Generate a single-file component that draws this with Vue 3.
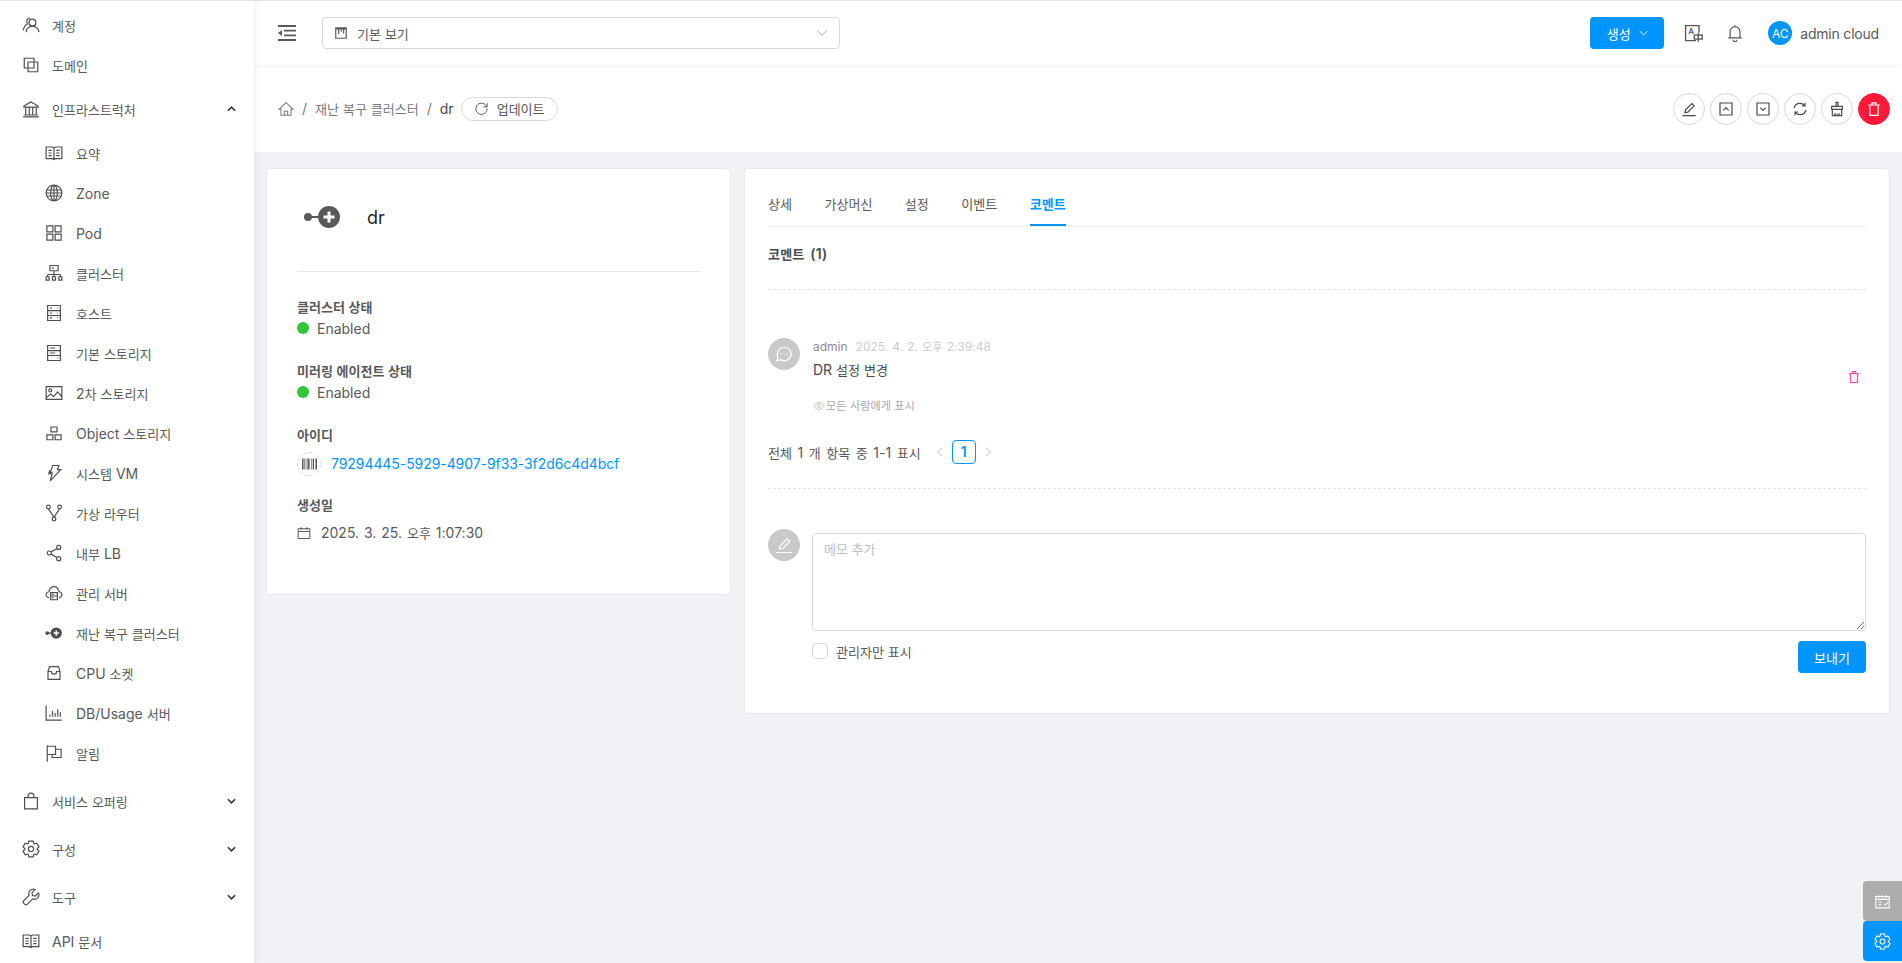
<script setup>
import { h } from 'vue';

const K = (p) =>
  p.t.split(/([\uAC00-\uD7A3]+)/).filter(Boolean).map((s) =>
    /[\uAC00-\uD7A3]/.test(s) ? h('span', { class: 'ko' }, s) : s
  );
K.props = ['t'];

function gearPath() {
  const pts = [];
  const c = 12;
  for (let i = 0; i < 6; i++) {
    const a = (Math.PI / 3) * i - Math.PI / 2;
    const w = 0.27;
    const p = (r, t) => `${(c + r * Math.cos(t)).toFixed(2)} ${(c + r * Math.sin(t)).toFixed(2)}`;
    pts.push(`${i === 0 ? 'M' : 'L'}${p(8.2, a - w * 1.7)}`, `L${p(11, a - w)}`, `L${p(11, a + w)}`, `L${p(8.2, a + w * 1.7)}`);
  }
  return pts.join(' ') + ' Z';
}
const gear = gearPath() + ' M15.5 12a3.5 3.5 0 1 1-7 0 3.5 3.5 0 0 1 7 0z';

const I = {
  team: 'M18.5 8.7a4.5 4.5 0 1 1-9 0 4.5 4.5 0 0 1 9 0z M5.5 21.5c.3-4.5 3.9-8 8.5-8s8.2 3.5 8.5 8 M10.5 2.8a4.5 4.5 0 0 0-3 7.6C4.5 12 2.5 15.5 1.5 19',
  domain: 'M3 3h13v5h5v13H8v-5H3z M8 8h8v8H8z',
  bank: 'M12 2.5 2.5 8v1.5h19V8z M5 9.5V20 M9.7 9.5V20 M14.3 9.5V20 M19 9.5V20 M3 20h18 M1.5 22.5h21',
  read: 'M1.5 4h8.5l2 1.2L14 4h8.5v15.5H14l-2 1.2-2-1.2H1.5z M12 5.2v15.5 M4.5 8.5h4.5 M4.5 12h4.5 M4.5 15.5h4.5 M15 8.5h4.5 M15 12h4.5 M15 15.5h4.5',
  globe: 'M22.5 12a10.5 10.5 0 1 1-21 0 10.5 10.5 0 0 1 21 0z M16.5 12a4.5 10.5 0 1 1-9 0 4.5 10.5 0 0 1 9 0z M12 1.5v21 M2.5 8h19 M2.5 16h19 M1.5 12h21',
  pod: 'M2.5 2.5h8v8h-8z M13.5 2.5h8v8h-8z M2.5 13.5h8v8h-8z M13.5 13.5h8v8h-8z',
  cluster: 'M6.5 2h11v7h-11z M12 9v5 M3.5 14h17 M3.5 14v3 M12 14v3 M20.5 14v3 M1.5 17h4v4.5h-4z M10 17h4v4.5h-4z M18.5 17h4v4.5h-4z M9 5.5h3',
  host: 'M3.5 2h17v20h-17z M3.5 8.7h17 M3.5 15.3h17 M6.5 5.3h3 M6.5 12h3 M6.5 18.6h3 M16.5 5.3h1 M16.5 12h1 M16.5 18.6h1',
  hdd: 'M3.5 2h17v20h-17z M3.5 8.7h17 M3.5 15.3h17 M6.5 5.3h7 M6.5 12h7 M16.5 18.6h1',
  picture: 'M1.5 3.5h21v17h-21z M5 8.5a2 2 0 1 0 4 0 2 2 0 0 0-4 0z M1.5 18.5l6-5 4 3.5 5.5-6.5 5.5 6.5',
  gold: 'M8 4h8v6.5H8z M2.5 14.5h8V21h-8z M13.5 14.5h8V21h-8z',
  bolt: 'M10.5 2h8l-2 5.5H21L7 22.5l2.5-9.5H5l1-3.5 3 1.5L6.5 12z',
  fork: 'M7 4a2.5 2.5 0 1 1-5 0 2.5 2.5 0 0 1 5 0z M22 4a2.5 2.5 0 1 1-5 0 2.5 2.5 0 0 1 5 0z M14.5 20a2.5 2.5 0 1 1-5 0 2.5 2.5 0 0 1 5 0z M4.5 6.5 12 17.5 M19.5 6.5 12 17.5',
  share: 'M21 4.5a2.7 2.7 0 1 1-5.4 0 2.7 2.7 0 0 1 5.4 0z M21 19.5a2.7 2.7 0 1 1-5.4 0 2.7 2.7 0 0 1 5.4 0z M8.4 12A2.7 2.7 0 1 1 3 12a2.7 2.7 0 0 1 5.4 0z M8 10.5 16 6 M8 13.5 16 18',
  cloud: 'M5.5 18.5C2.8 17.8 1 15.5 1.5 13.5c.5-2 2-3 3.8-3.2C6 6.5 8.7 3.5 12 3.5s6 3 6.7 6.8c1.8.2 3.3 1.2 3.8 3.2s-1.3 4.3-4 5 M7.5 11.5h9V21h-9z M7.5 16h9 M9.5 13.8h2 M9.5 18.5h2',
  inbox: 'M4 10 6 3.5h12l2 6.5v10.5H4z M4 10h4.5a3.5 3.5 0 0 0 7 0H20',
  chart: 'M1.5 2v19.5h21 M6.5 17v-3 M10 17V9 M13.5 17v-5 M17 17V7 M20.5 17v-6',
  flag: 'M3 1.5v22 M3 3h11v11H3 M14 7h7.5v11H9.5v-4',
  bag: 'M3.5 7.5h17v15h-17z M8 7.5v-2a4 4 0 0 1 8 0v2',
  gear,
  tool: 'M22 6.5l-4.2 4.200-3.800-.7-.7-3.800L17.500 2a6 6 0 0 0-8 7.800L2.200 17a2.200 2.200 0 0 0 0 3.100l1.700 1.700a2.200 2.200 0 0 0 3.100 0l7.200-7.300A6 6 0 0 0 22 6.500z',
  project: 'M3 3h18v18H3z M3 5h18 M8 5v9 M12.500 5v5 M16.500 5v8',
  home: 'M12 2.500 1.500 12.500h3v9h15v-9h3z M9.500 21.500v-6h5v6',
  reload: 'M20.500 9.500A9 9 0 1 0 21 12 M21 3.500v6h-6',
  bell: 'M12 1.500v2 M5.500 18.500V10a6.500 6.500 0 0 1 13 0v8.500 M3 18.500h18 M9.500 21a2.500 2.500 0 0 0 5 0',
  edit: 'M2 22h20 M6 17.500l.8-4.300L16.200 3.800l3.500 3.500-9.400 9.400z',
  up: 'M3 3h18v18H3z M8 14l4-4 4 4',
  down: 'M3 3h18v18H3z M8 10l4 4 4-4',
  sync: 'M3 10.500C4 6.500 7.500 3.500 12 3.500c2.600 0 5 1.200 6.500 3 M21 13.500c-1 4-4.500 7-9 7-2.600 0-5-1.200-6.500-3 M19.500 2.500v5h-5 M4.500 21.500v-5h5',
  broom: 'M10.500 2h3v6h-3z M4 8h16v4.500H4z M5 12.500V22h14v-9.500 M9 22v-4 M12 22v-3 M15 22v-4',
  trash: 'M3.500 6h17 M9 6V2.800h6V6 M5.800 6v15.500h12.400V6z',
  calendar: 'M2 4.500h20v17H2z M2 9.500h20 M7 2v5 M17 2v5',
  eye: 'M1.500 12C4 7.500 7.500 5 12 5s8 2.500 10.500 7C20 16.500 16.500 19 12 19S4 16.500 1.500 12z M15.500 12a3.500 3.500 0 1 1-7 0 3.500 3.500 0 0 1 7 0z',
  msg: 'M12 3a9 9 0 0 0-8 13l-1.500 5 5-1.500A9 9 0 1 0 12 3z M7.500 12h.5 M11.800 12h.5 M16 12h.5',
  review: 'M2.500 5h19v16h-19z M2.500 9h19 M7 3v4 M12 3v4 M17 3v4 M6 13h5 M6 17h5 M14 15l2 2 4-4'
};

const topA = [{ icon: 'team', label: '계정' }, { icon: 'domain', label: '도메인' }];
const subs = [
  { icon: 'read', label: '요약' }, { icon: 'globe', label: 'Zone' }, { icon: 'pod', label: 'Pod' },
  { icon: 'cluster', label: '클러스터' }, { icon: 'host', label: '호스트' }, { icon: 'hdd', label: '기본 스토리지' },
  { icon: 'picture', label: '2차 스토리지' }, { icon: 'gold', label: 'Object 스토리지' }, { icon: 'bolt', label: '시스템 VM' },
  { icon: 'fork', label: '가상 라우터' }, { icon: 'share', label: '내부 LB' }, { icon: 'cloud', label: '관리 서버' },
  { icon: 'dr', label: '재난 복구 클러스터' }, { icon: 'inbox', label: 'CPU 소켓' }, { icon: 'chart', label: 'DB/Usage 서버' },
  { icon: 'flag', label: '알림' }
];
const groups = [{ icon: 'bag', label: '서비스 오퍼링' }, { icon: 'gear', label: '구성' }, { icon: 'tool', label: '도구' }];
const tabs = ['상세', '가상머신', '설정', '이벤트', '코멘트'];
const actions = ['edit', 'up', 'down', 'sync', 'broom'];
const bars = [0, 2, 3.5, 6, 8, 9.5, 12, 14, 16.5, 18];
</script>

<template>
  <div class="app">
    <aside class="side">
      <div v-for="m in topA" :key="m.label" class="item top">
        <svg class="ic" viewBox="0 0 24 24"><path :d="I[m.icon]" /></svg>
        <span><K :t="m.label" /></span>
      </div>
      <div class="item group">
        <svg class="ic" viewBox="0 0 24 24"><path :d="I.bank" /></svg>
        <span class="grow"><K t="인프라스트럭처" /></span>
        <svg class="chev" viewBox="0 0 10 6"><path d="M1 5l4-4 4 4" /></svg>
      </div>
      <div v-for="m in subs" :key="m.label" class="item sub">
        <svg v-if="m.icon === 'dr'" class="ic" viewBox="0 0 24 24">
          <circle cx="15" cy="12" r="7.5" class="solid" /><circle cx="3" cy="12" r="2.5" class="solid" />
          <path d="M3 12h6" /><path d="M15 8.500v7M11.500 12h7" class="plus" />
        </svg>
        <svg v-else class="ic" viewBox="0 0 24 24"><path :d="I[m.icon]" /></svg>
        <span><K :t="m.label" /></span>
      </div>
      <div class="spacer4"></div>
      <div v-for="m in groups" :key="m.label" class="item group">
        <svg class="ic" viewBox="0 0 24 24"><path :d="I[m.icon]" /></svg>
        <span class="grow"><K :t="m.label" /></span>
        <svg class="chev" viewBox="0 0 10 6"><path d="M1 1l4 4 4-4" /></svg>
      </div>
      <div class="item top">
        <svg class="ic" viewBox="0 0 24 24"><path :d="I.read" /></svg>
        <span><K t="API 문서" /></span>
      </div>
    </aside>

    <main class="main">
      <header class="header">
        <svg class="fold" viewBox="0 0 18 16">
          <path d="M0 1h18M0 15h18M6 5.700h12M6 10.300h12" /><path d="M0 8l4-3v6z" class="tri" />
        </svg>
        <div class="select">
          <svg class="sel-ic" viewBox="0 0 24 24"><path :d="I.project" /></svg>
          <span class="grow"><K t="기본 보기" /></span>
          <svg class="sel-ch" viewBox="0 0 12 8"><path d="M1 1l5 5.500L11 1" /></svg>
        </div>
        <div class="grow"></div>
        <button class="create"><K t="생성" /><svg viewBox="0 0 12 8"><path d="M1 1.500l5 5 5-5" /></svg></button>
        <svg class="trans" viewBox="0 0 24 24">
          <path d="M15 21H2V2h17v9" /><rect x="13" y="14" width="10" height="5" />
          <path d="M18 11.500v11" /><text x="5.500" y="12" class="trans-a">A</text>
        </svg>
        <svg class="bell" viewBox="0 0 24 24"><path :d="I.bell" /></svg>
        <div class="user"><span class="ac">AC</span><span class="uname">admin cloud</span></div>
      </header>

      <section class="crumbs">
        <svg class="home" viewBox="0 0 24 24"><path :d="I.home" /></svg>
        <span class="sep">/</span><span><K t="재난 복구 클러스터" /></span>
        <span class="sep">/</span><span class="cur">dr</span>
        <span class="pill"><svg viewBox="0 0 24 24"><path :d="I.reload" /></svg><K t="업데이트" /></span>
        <div class="grow"></div>
        <div class="acts">
          <span v-for="a in actions" :key="a" class="act"><svg viewBox="0 0 24 24"><path :d="I[a]" /></svg></span>
          <span class="act red"><svg viewBox="0 0 24 24"><path :d="I.trash" /></svg></span>
        </div>
      </section>

      <div class="content">
        <section class="card left">
          <div class="title">
            <svg class="dr" viewBox="0 0 36 24">
              <circle cx="25" cy="12" r="11" /><circle cx="4" cy="12" r="4" /><path d="M4 12h12" class="line" />
              <path d="M25 6.500v11M19.500 12h11" class="cross" />
            </svg>
            <span>dr</span>
          </div>
          <div class="rule"></div>
          <div class="lab first"><K t="클러스터 상태" /></div>
          <div class="val"><i class="dot"></i>Enabled</div>
          <div class="lab"><K t="미러링 에이전트 상태" /></div>
          <div class="val"><i class="dot"></i>Enabled</div>
          <div class="lab"><K t="아이디" /></div>
          <div class="val idrow">
            <span class="bar-ic"><svg viewBox="0 0 19 14"><rect v-for="b in bars" :key="b" :x="b" y="0" :width="b % 2 === 0 ? 1 : 0.6" height="14" /></svg></span>
            <span class="link">79294445-5929-4907-9f33-3f2d6c4d4bcf</span>
          </div>
          <div class="lab l4"><K t="생성일" /></div>
          <div class="val daterow">
            <svg class="cal" viewBox="0 0 24 24"><path :d="I.calendar" /></svg>
            <span><K t="2025. 3. 25. 오후 1:07:30" /></span>
          </div>
        </section>

        <section class="card right">
          <nav class="tabs">
            <span v-for="t in tabs" :key="t" class="tab" :class="{ on: t === '코멘트' }"><K :t="t" /></span>
          </nav>
          <h4 class="ctitle"><K t="코멘트 (1)" /></h4>
          <div class="dash d1"></div>
          <div class="comment">
            <span class="ava a1"><svg viewBox="0 0 24 24"><path :d="I.msg" /></svg></span>
            <div class="grow">
              <div class="meta"><span class="who">admin</span><span class="when"><K t="2025. 4. 2. 오후 2:39:48" /></span></div>
              <div class="text"><K t="DR 설정 변경" /></div>
              <div class="vis"><svg viewBox="0 0 24 24"><path :d="I.eye" /></svg><span><K t="모든 사람에게 표시" /></span></div>
            </div>
            <svg class="del" viewBox="0 0 24 24"><path d="M5.800 6h12.400v15.500H5.800z" class="pinkfill" /><path :d="I.trash" /></svg>
          </div>
          <div class="pager">
            <span><K t="전체 1 개 항목 중 1-1 표시" /></span>
            <svg class="pg first" viewBox="0 0 8 12"><path d="M7 1 1.500 6 7 11" /></svg>
            <span class="pnum">1</span>
            <svg class="pg" viewBox="0 0 8 12"><path d="M1 1l5.500 5L1 11" /></svg>
          </div>
          <div class="dash d2"></div>
          <div class="compose">
            <span class="ava"><svg viewBox="0 0 24 24"><path :d="I.edit" /></svg></span>
            <div class="grow">
              <textarea class="ta" placeholder="메모 추가"></textarea>
              <div class="foot">
                <span class="cb"></span><span class="grow cbl"><K t="관리자만 표시" /></span>
                <button class="send"><K t="보내기" /></button>
              </div>
            </div>
          </div>
        </section>
      </div>
    </main>

    <div class="float gray"><svg viewBox="0 0 24 24"><path :d="I.review" /></svg></div>
    <div class="float blue"><svg viewBox="0 0 24 24"><path :d="I.gear" /></svg></div>
  </div>
</template>

<style>
.ko { font-size: .93em; }
</style>

<style scoped>
.app {
  display: flex; height: 962px; overflow: hidden; border-top: 1px solid #e3e3e3;
  font-family: Inter, "Noto Sans CJK KR", sans-serif; font-size: 14px; color: #595959; background: #f0f2f5;
}
svg { fill: none; stroke: currentColor; stroke-width: 1.5; flex: none; }
.grow { flex: 1; min-width: 0; }
.side { width: 254px; flex: none; background: #fff; padding-top: 4px; box-shadow: 2px 0 6px rgba(0, 21, 41, .06); z-index: 2; box-sizing: border-box; }
.item { display: flex; align-items: center; }
.top { height: 40px; padding-left: 22px; }
.group { height: 48px; padding-left: 22px; padding-right: 18px; }
.sub { height: 40px; padding-left: 45px; }
.ic { width: 18px; height: 18px; margin-right: 12px; stroke-width: 1.6; color: #4f4f4f; }
.sub .ic { margin-right: 13px; }
.solid { fill: currentColor; stroke: none; }
.plus { stroke: #fff; stroke-width: 2; }
.chev { width: 9px; height: 6px; stroke-width: 1.8; color: #333; }
.spacer4 { height: 4px; }
.main { flex: 1; min-width: 0; display: flex; flex-direction: column; }
.header { height: 64px; flex: none; background: #fff; display: flex; align-items: center; padding: 0 23px 0 24px; box-shadow: 0 1px 4px rgba(0, 21, 41, .06); z-index: 1; box-sizing: border-box; }
.fold { width: 18px; height: 16px; margin-right: 26px; stroke-width: 1.8; color: #595959; }
.tri { fill: currentColor; stroke: none; }
.select { width: 518px; height: 32px; box-sizing: border-box; border: 1px solid #d9d9d9; border-radius: 4px; display: flex; align-items: center; padding: 0 11px; }
.sel-ic { width: 14px; height: 14px; margin-right: 9px; stroke-width: 2; }
.sel-ch { width: 12px; height: 8px; color: #bfbfbf; stroke-width: 1.1; }
.create { width: 74px; height: 32px; border: 0; border-radius: 4px; background: #0094ff; color: #fff; font: inherit; display: flex; align-items: center; justify-content: center; gap: 8px; }
.create svg { width: 9px; height: 6px; stroke-width: 1.3; }
.trans { width: 19px; height: 19px; margin-left: 20px; stroke-width: 1.7; }
.trans-a { font: 600 10px Inter, sans-serif; fill: currentColor; stroke: none; }
.bell { width: 18px; height: 18px; margin-left: 23px; stroke-width: 1.6; }
.user { display: flex; align-items: center; gap: 8px; margin-left: 24px; }
.uname { letter-spacing: -.2px; }
.ac { width: 24px; height: 24px; border-radius: 50%; background: #0094ff; color: #fff; font-size: 12px; display: flex; align-items: center; justify-content: center; }
.crumbs { height: 87px; flex: none; background: #fff; display: flex; align-items: center; padding: 0 12px 0 24px; box-sizing: border-box; color: #7a7a7a; }
.home { width: 16px; height: 16px; stroke-width: 1.6; }
.sep { margin: 0 8px; }
.cur { color: #4a4a4a; }
.pill { margin-left: 7px; width: 97px; height: 24px; box-sizing: border-box; border: 1px solid #d9d9d9; border-radius: 12px; display: flex; align-items: center; justify-content: center; gap: 8px; color: #595959; }
.pill svg { width: 15px; height: 15px; stroke-width: 1.6; }
.acts { display: flex; gap: 5px; }
.act { width: 32px; height: 32px; box-sizing: border-box; border: 1px solid #d9d9d9; border-radius: 50%; display: flex; align-items: center; justify-content: center; }
.act svg { width: 16px; height: 16px; stroke-width: 1.8; color: #4a4a4a; }
.act.red { background: #ff1a3c; border-color: #ff1a3c; }
.act.red svg { color: #fff; }
.content { flex: 1; display: flex; align-items: flex-start; gap: 13px; padding: 16px 12px 0; }
.card { background: #fff; border: 1px solid #e8e8e8; border-radius: 4px; box-sizing: border-box; }
.left { width: 465px; height: 427px; padding: 30px 29px 0 30px; flex: none; }
.title { height: 36px; display: flex; align-items: center; padding-left: 7px; font-size: 18px; color: #262626; }
.dr { width: 36px; height: 24px; margin-right: 27px; fill: #595959; stroke: none; }
.line { stroke: #595959; stroke-width: 2; }
.cross { stroke: #fff; stroke-width: 3; }
.rule { height: 1px; background: #e8e8e8; margin-top: 36px; }
.lab { font-weight: 600; line-height: 22px; margin-top: 20px; color: #595959; }
.lab.first { margin-top: 24px; }
.lab.l4 { margin-top: 18px; }
.val { line-height: 22px; display: flex; align-items: center; }
.dot { width: 12px; height: 12px; border-radius: 50%; background: #2fc738; margin-right: 8px; margin-top: -2px; }
.idrow { height: 24px; margin-top: 6px; }
.bar-ic { width: 24px; height: 24px; box-sizing: border-box; border: 1px dashed #d9d9d9; border-radius: 50%; display: flex; align-items: center; justify-content: center; margin-right: 10px; }
.bar-ic svg { width: 15px; height: 12px; fill: #333; stroke: none; }
.link { color: #0094ff; letter-spacing: -.07px; }
.daterow { margin-top: 6px; word-spacing: 1px; }
.cal { width: 14px; height: 14px; margin-right: 10px; stroke-width: 1.7; }
.right { flex: 1; height: 546px; padding: 0 23px; }
.tabs { height: 58px; display: flex; gap: 32.5px; border-bottom: 1px solid #f0f0f0; box-sizing: border-box; }
.tab { height: 57px; line-height: 69px; box-sizing: border-box; }
.tab.on { color: #0094ff; font-weight: 600; border-bottom: 2px solid #0094ff; }
.ctitle { margin: 16px 0 0; font-size: 14px; line-height: 22px; font-weight: 600; color: #4a4a4a; word-spacing: 2px; letter-spacing: .2px; }
.dash { border-top: 1px dashed #e3e3e3; }
.d1 { margin-top: 24px; }
.comment { display: flex; margin-top: 48px; height: 88px; }
.ava { width: 32px; height: 32px; border-radius: 50%; background: #c9c9c9; color: #fff; display: flex; align-items: center; justify-content: center; margin-right: 12px; flex: none; }
.a1 { margin-right: 13px; }
.ava svg { width: 18px; height: 18px; stroke-width: 1.6; stroke-linecap: round; }
.meta { font-size: 12px; line-height: 18px; display: flex; gap: 8px; }
.who { color: #8c8c8c; }
.when { color: #ccc; word-spacing: .7px; }
.text { margin-top: 3px; line-height: 22px; color: #4a4a4a; }
.vis { margin-top: 16px; font-size: 12px; line-height: 18px; color: #aaa; display: flex; align-items: center; gap: 1px; }
.vis svg { width: 12px; height: 12px; stroke-width: 1.4; }
.del { width: 14px; height: 14px; color: #ec4899; margin: 32px 5px 0 0; stroke-width: 1.8; }
.pinkfill { fill: #fff0f6; stroke: none; }
.pager { display: flex; align-items: center; margin-top: 14px; height: 24px; word-spacing: 1.6px; }
.pg { width: 7px; height: 10px; color: #bbb; stroke-width: 1.2; }
.pg.first { margin-left: 15px; }
.pnum { width: 24px; height: 24px; box-sizing: border-box; border: 1px solid #0094ff; border-radius: 4px; color: #0094ff; font-weight: 600; text-align: center; line-height: 22px; margin: 0 9px; }
.d2 { margin-top: 24px; }
.compose { display: flex; margin-top: 40px; }
.ta { display: block; width: 100%; height: 98px; box-sizing: border-box; margin-top: 4px; border: 1px solid #d9d9d9; border-radius: 4px; padding: 4px 11px; font: inherit; line-height: 22px; color: #595959; outline: 0; }
.ta::placeholder { color: #bfbfbf; font-size: 13px; }
.foot { display: flex; align-items: center; margin-top: 10px; }
.cb { width: 16px; height: 16px; box-sizing: border-box; border: 1px solid #d9d9d9; border-radius: 4px; margin-right: 8px; margin-top: -12px; }
.cbl { margin-top: -12px; }
.send { width: 68px; height: 32px; border: 0; border-radius: 4px; background: #0094ff; color: #fff; font: inherit; }
.float { position: fixed; right: 0; width: 39px; height: 40px; display: flex; align-items: center; justify-content: center; color: #fff; border-radius: 4px 0 0 4px; z-index: 3; }
.float svg { width: 17px; height: 17px; stroke-width: 1.5; }
.gray { top: 881px; background: #adadad; }
.blue { top: 921px; background: #0094ff; }
</style>
